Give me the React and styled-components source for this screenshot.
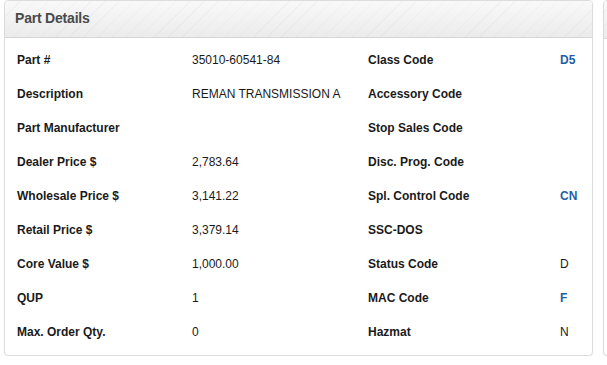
import React from "react";
import styled, { createGlobalStyle } from "styled-components";

const Global = createGlobalStyle`
  html, body { margin: 0; padding: 0; background: #fff; overflow: hidden; }
  body { font-family: "Liberation Sans", Arial, sans-serif; }
`;

const Page = styled.div`
  display: flex;
  gap: 10px;
  padding: 0 0 0 4px;
  width: 607px;
  box-sizing: border-box;
  overflow: hidden;
`;

const Panel = styled.section`
  flex: none;
  width: ${(p) => p.$w}px;
  height: 356px;
  box-sizing: border-box;
  border: 1px solid #dcdcdc;
  border-radius: 4px;
  box-shadow: 0 1px 2px rgba(0, 0, 0, 0.06);
  background: #fff;
  overflow: hidden;
  display: flex;
  flex-direction: column;
`;

const Header = styled.header`
  height: 38px;
  box-sizing: border-box;
  border-bottom: 1px solid #d6d6d6;
  padding: 0 0 3px 10px;
  display: flex;
  align-items: center;
  background:
    repeating-linear-gradient(
      -45deg,
      rgba(255, 255, 255, 0) 0px,
      rgba(255, 255, 255, 0) 9px,
      rgba(0, 0, 0, 0.025) 9px,
      rgba(0, 0, 0, 0.025) 10px
    ),
    linear-gradient(#f9f9f9, #ebebeb);
`;

const Title = styled.h2`
  margin: 0;
  font-size: 14px;
  font-weight: bold;
  color: #4a4a4a;
  letter-spacing: -0.2px;
`;

const Body = styled.div`
  padding: 5px 12px 6px 12px;
`;

const Grid = styled.div`
  display: grid;
  grid-template-columns: 175px 176px 192px 1fr;
  grid-auto-rows: 34px;
`;

const Cell = styled.div`
  display: flex;
  align-items: center;
  font-size: 12px;
  white-space: nowrap;
  font-weight: ${(p) => (p.$label || p.$link ? "bold" : "normal")};
  color: ${(p) => (p.$link ? "#1f5fa6" : "#1a1a1a")};
`;

const rows = [
  ["Part #", "35010-60541-84", "Class Code", "D5", true],
  ["Description", "REMAN TRANSMISSION A", "Accessory Code", "", false],
  ["Part Manufacturer", "", "Stop Sales Code", "", false],
  ["Dealer Price $", "2,783.64", "Disc. Prog. Code", "", false],
  ["Wholesale Price $", "3,141.22", "Spl. Control Code", "CN", true],
  ["Retail Price $", "3,379.14", "SSC-DOS", "", false],
  ["Core Value $", "1,000.00", "Status Code", "D", false],
  ["QUP", "1", "MAC Code", "F", true],
  ["Max. Order Qty.", "0", "Hazmat", "N", false],
];

export default function App() {
  return (
    <>
      <Global />
      <Page>
        <Panel $w={589}>
          <Header>
            <Title>Part Details</Title>
          </Header>
          <Body>
            <Grid>
              {rows.map(([l1, v1, l2, v2, link]) => (
                <React.Fragment key={l1}>
                  <Cell $label>{l1}</Cell>
                  <Cell>{v1}</Cell>
                  <Cell $label>{l2}</Cell>
                  <Cell $link={link}>{v2}</Cell>
                </React.Fragment>
              ))}
            </Grid>
          </Body>
        </Panel>
        <Panel $w={400}>
          <Header />
        </Panel>
      </Page>
    </>
  );
}
